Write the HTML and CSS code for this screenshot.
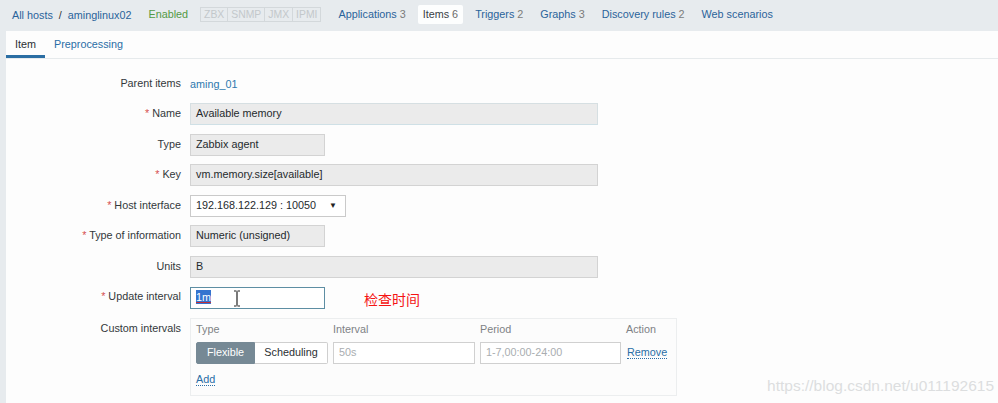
FILE: index.html
```html
<!DOCTYPE html>
<html lang="en">
<head>
<meta charset="utf-8">
<title>Item</title>
<link rel="stylesheet" href="styles.css">
</head>
<body>
<div class="page">
  <nav class="topbar">
    <div class="crumbs">
      <a class="link" href="#">All hosts</a><span class="sep">/</span><a class="link" href="#">aminglinux02</a>
    </div>
    <span class="nav-item status-on">Enabled</span>
    <div class="avail">
      <span class="avail-cell">ZBX</span><span class="avail-cell">SNMP</span><span class="avail-cell">JMX</span><span class="avail-cell">IPMI</span>
    </div>
    <a class="nav-item" href="#">Applications <span class="cnt">3</span></a>
    <a class="nav-item selected" href="#">Items <span class="cnt">6</span></a>
    <a class="nav-item" href="#">Triggers <span class="cnt">2</span></a>
    <a class="nav-item" href="#">Graphs <span class="cnt">3</span></a>
    <a class="nav-item" href="#">Discovery rules <span class="cnt">2</span></a>
    <a class="nav-item" href="#">Web scenarios</a>
  </nav>

  <main class="panel">
    <div class="tabs">
      <span class="tab active">Item</span>
      <a class="tab" href="#">Preprocessing</a>
    </div>

    <form class="form">
      <div class="row">
        <label class="lbl">Parent items</label>
        <div class="field"><a class="link plain" href="#">aming_01</a></div>
      </div>
      <div class="row">
        <label class="lbl"><span class="req">*</span> Name</label>
        <div class="field"><div class="input ro wide name-in">Available memory</div></div>
      </div>
      <div class="row">
        <label class="lbl">Type</label>
        <div class="field"><div class="input ro short">Zabbix agent</div></div>
      </div>
      <div class="row">
        <label class="lbl"><span class="req">*</span> Key</label>
        <div class="field"><div class="input ro wide">vm.memory.size[available]</div></div>
      </div>
      <div class="row">
        <label class="lbl"><span class="req">*</span> Host interface</label>
        <div class="field"><div class="input select">192.168.122.129 : 10050<span class="arrow">▼</span></div></div>
      </div>
      <div class="row">
        <label class="lbl"><span class="req">*</span> Type of information</label>
        <div class="field"><div class="input ro short">Numeric (unsigned)</div></div>
      </div>
      <div class="row">
        <label class="lbl">Units</label>
        <div class="field"><div class="input ro wide">B</div></div>
      </div>
      <div class="row">
        <label class="lbl"><span class="req">*</span> Update interval</label>
        <div class="field">
          <div class="input short focus"><span class="sel">1m</span>
            <svg class="ibeam" width="8" height="17" viewBox="0 0 8 17"><path d="M1 1h2.5M4.5 1H7M4 1.5v14M1 16h2.5M4.5 16H7" stroke="#222" stroke-width="1.2" fill="none"/></svg>
          </div>
          <span class="note">检查时间</span>
        </div>
      </div>
      <div class="row">
        <label class="lbl">Custom intervals</label>
        <div class="field">
          <div class="intervals">
            <div class="ih">Type</div><div class="ih">Interval</div><div class="ih">Period</div><div class="ih">Action</div>
            <div class="seg"><span class="seg-btn on">Flexible</span><span class="seg-btn">Scheduling</span></div>
            <div class="input plain-in ph">50s</div>
            <div class="input plain-in ph">1-7,00:00-24:00</div>
            <div class="act"><a class="dlink" href="#">Remove</a></div>
            <div class="add"><a class="dlink" href="#">Add</a></div>
          </div>
        </div>
      </div>
    </form>
    <div class="watermark">https://blog.csdn.net/u011192615</div>
  </main>
</div>
</body>
</html>
```

FILE: styles.css
```css
* { box-sizing: border-box; }
html, body { margin: 0; padding: 0; }
body {
  font-family: "Liberation Sans", Arial, sans-serif;
  font-size: 10.8px;
  color: #2b3033;
  background: #e7ebee;
  width: 998px;
  height: 403px;
  overflow: hidden;
}
a { text-decoration: none; }
.link { color: #2a639a; }
.link.plain { color: #2e78ad; }

.topbar {
  height: 31px;
  display: flex;
  align-items: center;
  gap: 7px;
  padding: 0 0 2px 7px;
  background: #e7ebee;
}
.crumbs { padding: 3px 5px; display: flex; align-items: center; }
.sep { margin: 0 6px; color: #333; }
.nav-item { padding: 3px 5px; color: #2a639a; line-height: 13px; }
.nav-item .cnt { color: #7b7b7b; }
.nav-item.selected { background: #fdfefe; color: #3a4045; border-radius: 2px; }
.nav-item.selected .cnt { color: #6b6b6b; }
.status-on { color: #539a45; }
.avail {
  display: flex;
  height: 15px;
  border: 1px solid #d3d8db;
  margin-right: 5px;
  font-size: 10.4px;
}
.avail-cell {
  padding: 0 3px;
  line-height: 13px;
  color: #c3c8cb;
  border-left: 1px solid #d3d8db;
}
.avail-cell:first-child { border-left: 0; }

.panel {
  position: relative;
  margin-left: 6px;
  height: 372px;
  background: #fdfdfd;
}
.tabs {
  display: flex;
  height: 28px;
  border-bottom: 1px solid #e6eaec;
}
.tab {
  padding: 7px 9px 5px;
  line-height: 13px;
  color: #2a6ea6;
  height: 27px;
}
.tab.active {
  color: #2b3033;
  border-bottom: 3px solid #2b6ea3;
}

.form {
  padding-top: 14px;
  display: flex;
  flex-direction: column;
  gap: 8.9px;
}
.row {
  display: grid;
  grid-template-columns: 175px 1fr;
  column-gap: 9px;
}
.lbl {
  text-align: right;
  line-height: 21.6px;
  color: #33383b;
}
.req { color: #d64f4f; }
.field {
  display: flex;
  align-items: center;
  min-height: 21.6px;
}
.input {
  position: relative;
  height: 21.6px;
  line-height: 19.6px;
  padding: 0 5px;
  border: 1px solid #d3d3d3;
  background: #fff;
  color: #252a2d;
  white-space: nowrap;
}
.input.ro { background: #ebebeb; }
.input.wide { width: 408px; }
.input.short { width: 135px; }
.name-in { border-color: #d6dfe2; border-bottom-color: #cfe0e6; }
.input.select { width: 156px; border-color: #cacaca; }
.arrow {
  position: absolute;
  right: 8px;
  top: 0;
  font-size: 8px;
  color: #222;
}
.input.focus { border-color: #5d8ea3; }
.sel {
  background: #3474cf;
  color: #fff;
  text-decoration: underline #c0303a;
  padding: 1px 0;
}
.ibeam { position: absolute; left: 42px; top: 2px; }
.note {
  margin-left: 39px;
  margin-top: 3px;
  font-family: "Noto Sans CJK SC", sans-serif;
  font-size: 14px;
  color: #f51414;
}

.intervals {
  width: 487px;
  height: 78px;
  border: 1px solid #eceeef;
  background: #fcfcfc;
  padding: 3px 9px 0 5px;
  display: grid;
  grid-template-columns: 132px 142px 141px auto;
  grid-template-rows: 14px 21.6px auto;
  column-gap: 5px;
  row-gap: 6px;
}
.ih { color: #7e8285; line-height: 14px; }
.seg { display: flex; height: 21.6px; }
.seg-btn {
  line-height: 19.6px;
  border: 1px solid #cfcfcf;
  border-left: 0;
  background: #fff;
  color: #2b3033;
  padding: 0 9px;
  width: 73px;
  text-align: center;
  border-radius: 0 2px 2px 0;
}
.seg-btn.on {
  width: 59px;
  background: #768995;
  border: 1px solid #768995;
  color: #fff;
  border-radius: 2px 0 0 2px;
}
.plain-in { width: 100%; border-color: #d0d0d0; }
.ph { color: #a9adb0; }
.act { line-height: 21.6px; padding-left: 1px; }
.dlink {
  color: #2a6ea6;
  border-bottom: 1px dotted #2a6ea6;
}
.add { grid-column: 1 / span 4; padding-top: 3px; line-height: 13px; }

.watermark {
  position: absolute;
  right: 4px;
  bottom: 8px;
  font-size: 15.5px;
  color: #dcdedf;
  letter-spacing: 0;
}
```
